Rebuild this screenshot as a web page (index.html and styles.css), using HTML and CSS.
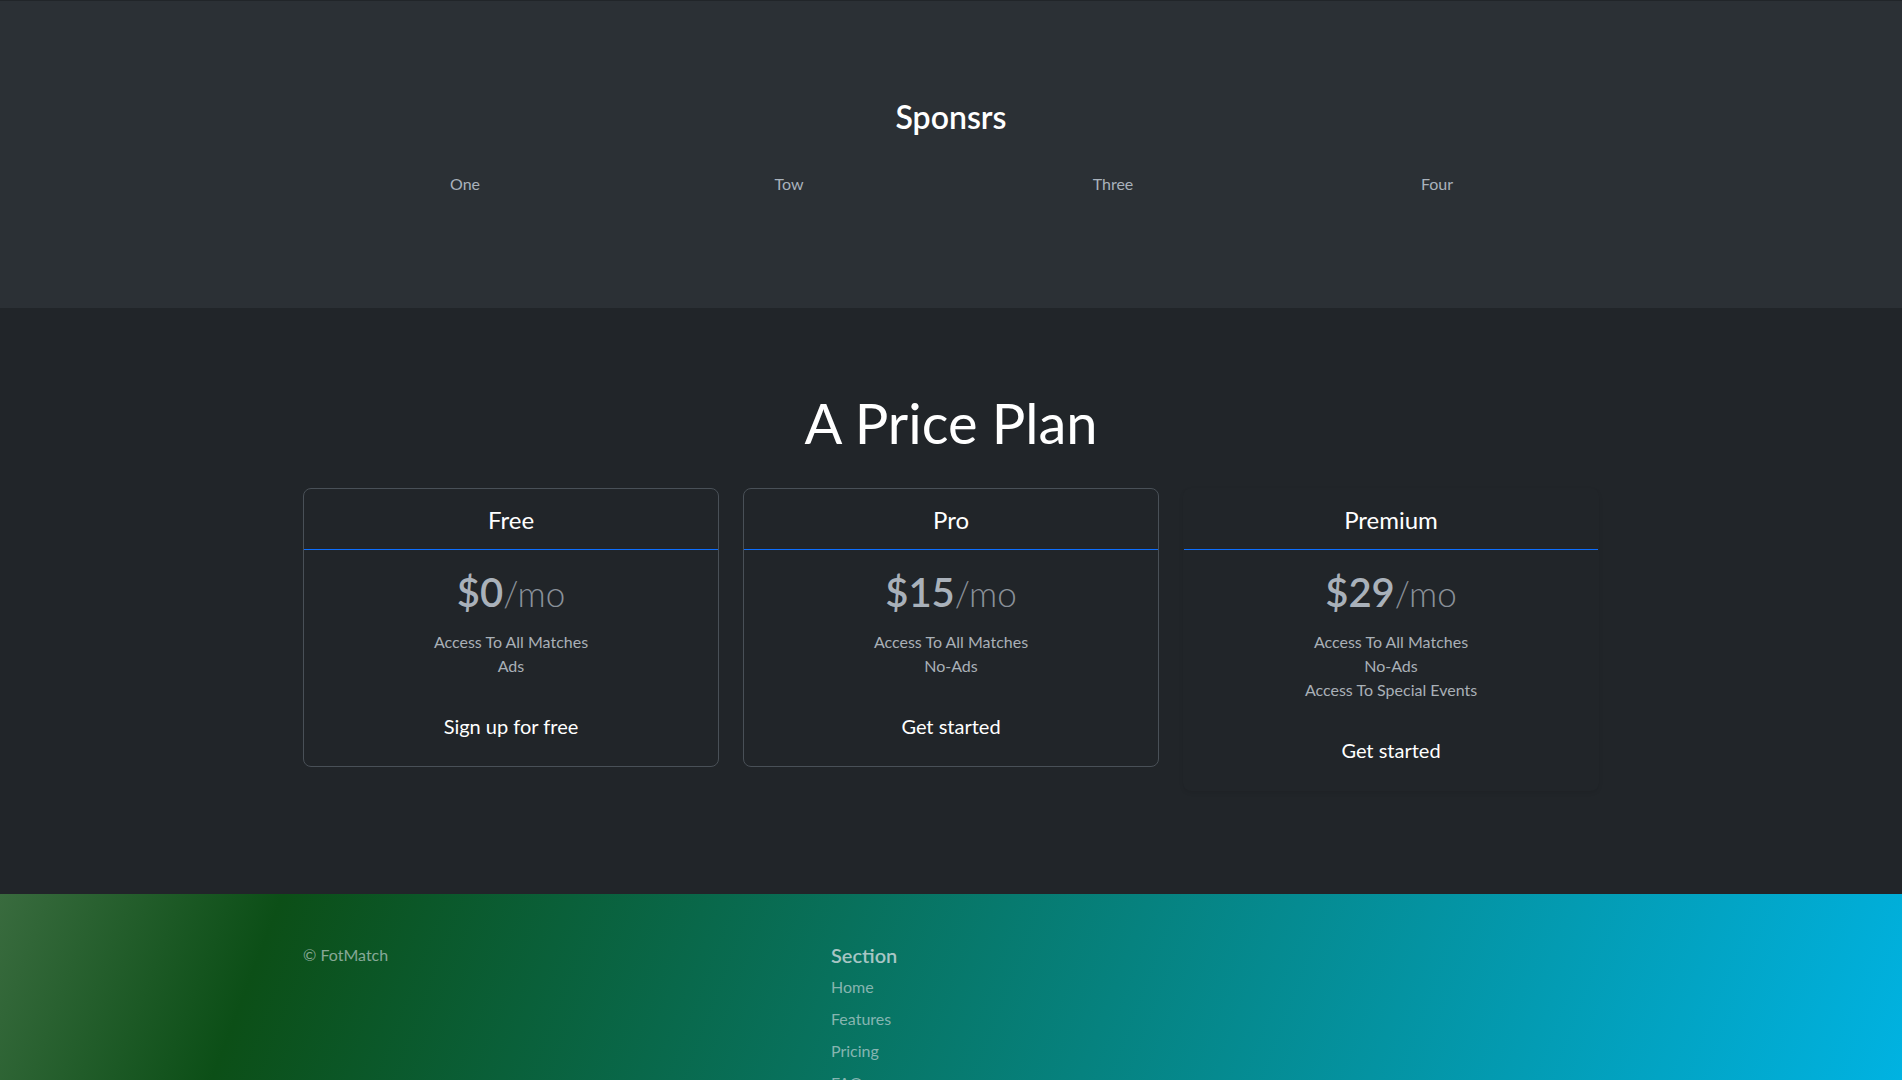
FILE: index.html
```html
<!DOCTYPE html>
<html lang="en">
<head>
<meta charset="utf-8">
<title>FotMatch</title>
<link rel="stylesheet" href="styles.css">
</head>
<body>
<section class="sponsors">
  <div class="container">
    <h2 class="sponsors-title">Sponsrs</h2>
    <div class="sponsor-row">
      <div class="sponsor">One</div>
      <div class="sponsor">Tow</div>
      <div class="sponsor">Three</div>
      <div class="sponsor">Four</div>
    </div>
  </div>
</section>

<main class="pricing">
  <div class="container">
    <h1 class="pricing-title">A Price Plan</h1>
    <div class="plans">
      <div class="plan">
        <div class="plan-header"><h4 class="plan-name">Free</h4></div>
        <div class="plan-body">
          <h1 class="price">$0<small class="price-unit">/mo</small></h1>
          <ul class="features">
            <li>Access To All Matches</li>
            <li>Ads</li>
          </ul>
          <button type="button" class="plan-btn">Sign up for free</button>
        </div>
      </div>
      <div class="plan">
        <div class="plan-header"><h4 class="plan-name">Pro</h4></div>
        <div class="plan-body">
          <h1 class="price">$15<small class="price-unit">/mo</small></h1>
          <ul class="features">
            <li>Access To All Matches</li>
            <li>No-Ads</li>
          </ul>
          <button type="button" class="plan-btn">Get started</button>
        </div>
      </div>
      <div class="plan plan-featured">
        <div class="plan-header"><h4 class="plan-name">Premium</h4></div>
        <div class="plan-body">
          <h1 class="price">$29<small class="price-unit">/mo</small></h1>
          <ul class="features">
            <li>Access To All Matches</li>
            <li>No-Ads</li>
            <li>Access To Special Events</li>
          </ul>
          <button type="button" class="plan-btn">Get started</button>
        </div>
      </div>
    </div>
  </div>
</main>

<footer class="footer">
  <div class="container footer-grid">
    <div class="footer-col">
      <p class="copyright">© FotMatch</p>
    </div>
    <div class="footer-col"></div>
    <div class="footer-col">
      <h5 class="footer-heading">Section</h5>
      <ul class="footer-nav">
        <li><a href="#">Home</a></li>
        <li><a href="#">Features</a></li>
        <li><a href="#">Pricing</a></li>
        <li><a href="#">FAQs</a></li>
        <li><a href="#">About</a></li>
      </ul>
    </div>
    <div class="footer-col"></div>
    <div class="footer-col"></div>
  </div>
</footer>
</body>
</html>
```

FILE: styles.css
```css
* { box-sizing: border-box; }

html, body {
  margin: 0;
  padding: 0;
}

body {
  background: #212529;
  color: #dee2e6;
  font-family: "Lato", "Noto Sans", "Liberation Sans", sans-serif;
  font-size: 16px;
  line-height: 1.5;
}

.container {
  width: 1296px;
  margin: 0 auto;
}

/* Sponsors */
.sponsors {
  background: #2b3035;
  border-top: 1px solid #212529;
  padding: 97px 0 112px;
}

.sponsors-title {
  margin: 0 0 36px;
  font-size: 32px;
  line-height: 1.2;
  font-weight: 600;
  color: #fff;
  text-align: center;
}

.sponsor-row {
  display: grid;
  grid-template-columns: repeat(4, 1fr);
}

.sponsor {
  text-align: center;
  color: #a9b2bc;
  font-size: 16px;
  line-height: 24px;
}

/* Pricing */
.pricing {
  padding: 81px 0 103px;
}

.pricing-title {
  margin: 0 0 31px;
  font-size: 56px;
  line-height: 1.2;
  font-weight: 400;
  color: #fff;
  text-align: center;
}

.plans {
  display: grid;
  grid-template-columns: repeat(3, 1fr);
  column-gap: 24px;
  align-items: start;
}

.plan {
  border: 1px solid #495057;
  border-radius: 8px;
  text-align: center;
  background: #212529;
}

.plan-featured {
  border-color: transparent;
  box-shadow: 0 2px 4px rgba(0, 0, 0, 0.08);
}

.plan-header {
  padding: 17px 16px 15px;
  border-bottom: 1px solid #0d6efd;
}

.plan-name {
  margin: 0;
  font-size: 24px;
  line-height: 1.2;
  font-weight: 400;
  color: #fff;
}

.plan-body {
  padding: 18px 16px 16px;
}

.price {
  margin: 0;
  font-size: 40px;
  line-height: 1.2;
  font-weight: 600;
  color: #a9b1ba;
}

.price-unit {
  font-size: 0.875em;
  font-weight: 300;
  color: #8a9199;
}

.features {
  list-style: none;
  margin: 14px 0 24px;
  padding: 0;
  color: #a9b0b7;
  font-size: 16px;
  line-height: 24px;
}

.plan-btn {
  display: block;
  width: 100%;
  padding: 8px 16px;
  border: 1px solid transparent;
  border-radius: 8px;
  background: transparent;
  color: #fff;
  font-family: inherit;
  font-size: 20px;
  line-height: 1.5;
  cursor: pointer;
}

/* Footer */
.footer {
  background: linear-gradient(111deg, #396b3e 0%, #0c4f17 14%, #00b5e7 100%);
  padding: 49px 0 48px;
}

.footer-grid {
  display: grid;
  grid-template-columns: repeat(5, 1fr);
  column-gap: 24px;
}

.footer-col {
  margin-bottom: 16px;
}

.copyright {
  margin: 0;
  color: rgba(222, 226, 230, 0.6);
  font-size: 16px;
  line-height: 24px;
}

.footer-heading {
  margin: 0 0 8px;
  font-size: 20px;
  line-height: 1.2;
  font-weight: 600;
  color: rgba(222, 226, 230, 0.75);
}

.footer-nav {
  list-style: none;
  margin: 0;
  padding: 0;
}

.footer-nav li {
  margin-bottom: 8px;
}

.footer-nav a {
  color: rgba(222, 226, 230, 0.6);
  text-decoration: none;
  font-size: 16px;
  line-height: 24px;
}
```
